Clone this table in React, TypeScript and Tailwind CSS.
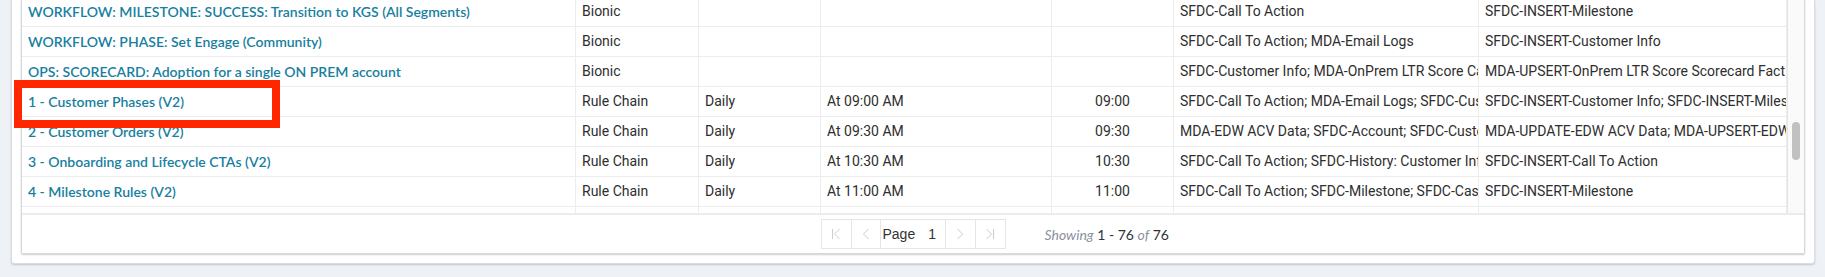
import React from "react";

type Row = {
  name: string;
  type: string;
  freq: string;
  sched: string;
  time: string;
  src: string;
  tgt: string;
};

const rows: Row[] = [
  {
    name: "WORKFLOW: MILESTONE: SUCCESS: Transition to KGS (All Segments)",
    type: "Bionic",
    freq: "",
    sched: "",
    time: "",
    src: "SFDC-Call To Action",
    tgt: "SFDC-INSERT-Milestone",
  },
  {
    name: "WORKFLOW: PHASE: Set Engage (Community)",
    type: "Bionic",
    freq: "",
    sched: "",
    time: "",
    src: "SFDC-Call To Action; MDA-Email Logs",
    tgt: "SFDC-INSERT-Customer Info",
  },
  {
    name: "OPS: SCORECARD: Adoption for a single ON PREM account",
    type: "Bionic",
    freq: "",
    sched: "",
    time: "",
    src: "SFDC-Customer Info; MDA-OnPrem LTR Score Card Fact",
    tgt: "MDA-UPSERT-OnPrem LTR Score Scorecard Fact",
  },
  {
    name: "1 - Customer Phases (V2)",
    type: "Rule Chain",
    freq: "Daily",
    sched: "At 09:00 AM",
    time: "09:00",
    src: "SFDC-Call To Action; MDA-Email Logs; SFDC-Customer Info",
    tgt: "SFDC-INSERT-Customer Info; SFDC-INSERT-Milestone",
  },
  {
    name: "2 - Customer Orders (V2)",
    type: "Rule Chain",
    freq: "Daily",
    sched: "At 09:30 AM",
    time: "09:30",
    src: "MDA-EDW ACV Data; SFDC-Account; SFDC-Customer Info",
    tgt: "MDA-UPDATE-EDW ACV Data; MDA-UPSERT-EDW ACV Data",
  },
  {
    name: "3 - Onboarding and Lifecycle CTAs (V2)",
    type: "Rule Chain",
    freq: "Daily",
    sched: "At 10:30 AM",
    time: "10:30",
    src: "SFDC-Call To Action; SFDC-History: Customer Info",
    tgt: "SFDC-INSERT-Call To Action",
  },
  {
    name: "4 - Milestone Rules (V2)",
    type: "Rule Chain",
    freq: "Daily",
    sched: "At 11:00 AM",
    time: "11:00",
    src: "SFDC-Call To Action; SFDC-Milestone; SFDC-Case",
    tgt: "SFDC-INSERT-Milestone",
  },
  { name: "", type: "", freq: "", sched: "", time: "", src: "", tgt: "" },
];

const cell =
  "h-[30px] flex items-center px-[6px] border-r border-b border-[#ececec] overflow-hidden whitespace-nowrap";
const dataText = "text-[14px] text-[#2e2e2e] [font-family:Roboto,'Liberation_Sans',sans-serif]";

function Chevron({ dir, bar }: { dir: "l" | "r"; bar?: boolean }) {
  return (
    <svg width="12" height="14" viewBox="0 0 12 14" fill="none" stroke="#c9cbd0" strokeWidth="1">
      {dir === "l" ? (
        <>
          {bar && <line x1="2.5" y1="2" x2="2.5" y2="12" />}
          <polyline points={bar ? "9.5,2 4.5,7 9.5,12" : "8.5,2 3.5,7 8.5,12"} />
        </>
      ) : (
        <>
          <polyline points={bar ? "2.5,2 7.5,7 2.5,12" : "3.5,2 8.5,7 3.5,12"} />
          {bar && <line x1="9.5" y1="2" x2="9.5" y2="12" />}
        </>
      )}
    </svg>
  );
}

export default function App() {
  return (
    <div className="w-[1825px] h-[277px] overflow-hidden bg-[#eef1f6] pl-[11px] pr-[10px]">
      <div className="relative bg-white border-x border-b border-[#d9dce1] rounded-b-[3px] shadow-[0_1px_2px_rgba(0,0,0,0.18)] px-[9px] pb-[9px]">
        <div className="bg-white border-x border-b border-[#d6d8dc] rounded-b-[2px] shadow-[0_1px_2px_rgba(0,0,0,0.2)]">
          <div className="flex h-[213px]">
            <div className="flex-1 overflow-hidden">
              <div className="-mt-[3px]">
                {rows.map((r, i) => (
                  <div
                    key={i}
                    className="grid grid-cols-[554px_123px_122px_231px_122px_305px_308px]"
                  >
                    <div className={cell}>
                      <span className="text-[14px] font-semibold text-[#17809f] [font-family:Lato,'Open_Sans',sans-serif]">
                        {r.name}
                      </span>
                    </div>
                    <div className={`${cell} ${dataText}`}>{r.type}</div>
                    <div className={`${cell} ${dataText}`}>{r.freq}</div>
                    <div className={`${cell} ${dataText}`}>{r.sched}</div>
                    <div className={`${cell} ${dataText} justify-center`}>{r.time}</div>
                    <div className={`${cell} ${dataText}`}>{r.src}</div>
                    <div className={`${cell} ${dataText}`}>{r.tgt}</div>
                  </div>
                ))}
              </div>
            </div>
            <div className="w-[17px] border-l border-[#e6e6e6] bg-[#fafafa] flex justify-center pt-[122px]">
              <div className="w-[8px] h-[38px] rounded-full bg-[#c1c1c1]" />
            </div>
          </div>
          <div className="h-[2px] bg-[#ececec]" />
          <div className="h-[38px] grid grid-cols-[1fr_auto_1fr] items-center">
            <div />
            <div className="flex h-[30px] border border-[#e6e6e6]">
              <div className="w-[30px] flex items-center justify-center border-r border-[#e6e6e6]">
                <Chevron dir="l" bar />
              </div>
              <div className="w-[29px] flex items-center justify-center border-r border-[#e6e6e6]">
                <Chevron dir="l" />
              </div>
              <div className="w-[65px] flex items-center border-r border-[#e6e6e6] text-[14px] text-[#333333] [font-family:'Liberation_Sans',Arial,sans-serif]">
                <span className="pl-[2px]">Page</span>
                <span className="ml-[13px]">1</span>
              </div>
              <div className="w-[30px] flex items-center justify-center border-r border-[#e6e6e6]">
                <Chevron dir="r" />
              </div>
              <div className="w-[29px] flex items-center justify-center">
                <Chevron dir="r" bar />
              </div>
            </div>
            <div className="pl-[39px] text-[14px] [font-family:Lato,'Open_Sans',sans-serif] text-[#2f3338]">
              <span className="italic text-[#8b90a0]">Showing</span> 1 - 76{" "}
              <span className="italic text-[#8b90a0]">of</span> 76
            </div>
          </div>
        </div>
        <div className="absolute left-[2px] top-[80px] w-[266px] h-[48px] border-[8px] border-[#ff2600] pointer-events-none" />
      </div>
    </div>
  );
}
